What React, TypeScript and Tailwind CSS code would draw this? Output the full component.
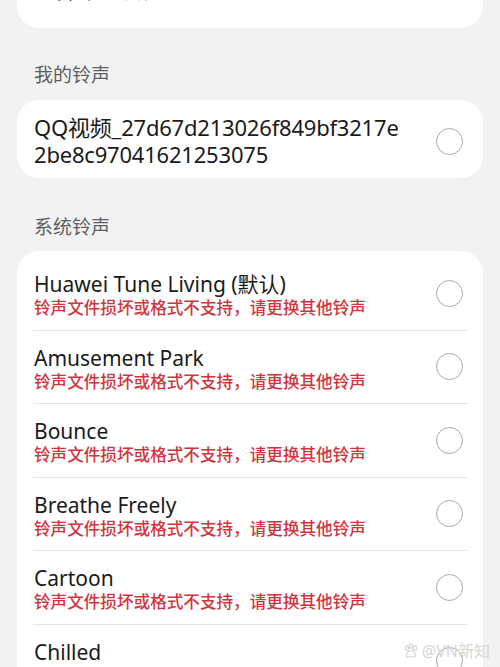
import React from "react";

const font = { fontFamily: '"Noto Sans", "Noto Sans CJK SC", sans-serif' };

const ERR = "铃声文件损坏或格式不支持，请更换其他铃声";

function Radio() {
  return <div className="w-[27px] h-[27px] rounded-full border-[1.5px] border-[#a8a8a8] shrink-0" />;
}

function Paw() {
  return (
    <svg width="16" height="16" viewBox="0 0 16 16" fill="none" stroke="#d6d6d6" strokeWidth="1.2">
      <ellipse cx="4" cy="5" rx="1.6" ry="2.1" />
      <ellipse cx="8" cy="3.2" rx="1.6" ry="2.1" />
      <ellipse cx="12" cy="5" rx="1.6" ry="2.1" />
      <path d="M8 7.5c-2.6 0-4.6 3.2-4.6 5 0 1.4 1.4 1.8 2.4 1.5.9-.3 1.5-.5 2.2-.5s1.3.2 2.2.5c1 .3 2.4-.1 2.4-1.5 0-1.8-2-5-4.6-5z" />
    </svg>
  );
}

const rows = [
  "Huawei Tune Living (默认)",
  "Amusement Park",
  "Bounce",
  "Breathe Freely",
  "Cartoon",
  "Chilled",
];

export default function App() {
  return (
    <div className="relative w-[500px] h-[667px] overflow-hidden bg-[#f2f2f2]" style={font}>
      <div className="px-[17px]">
        <div className="mt-[-40px] h-[68px] bg-white rounded-[22px] px-[17px] flex items-start">
          <div className="mt-[16px] text-[22px] leading-[26px] text-[#1a1a1a]">选择来电铃声</div>
        </div>

        <div className="mt-[34px] mb-[12px] px-[17px] text-[19px] leading-[26px] text-[#5f5f5f]">我的铃声</div>

        <div className="bg-white rounded-[22px] pl-[17px] pr-[20px] pt-[14px] pb-[10px] flex items-center justify-between">
          <div className="text-[22px] leading-[27px] text-[#1a1a1a] tracking-[-0.2px]">
            <div className="h-[27px]">QQ视频_27d67d213026f849bf3217e</div>
            <div className="h-[27px]">2be8c97041621253075</div>
          </div>
          <Radio />
        </div>

        <div className="mt-[36px] mb-[11px] px-[17px] text-[19px] leading-[26px] text-[#5f5f5f]">系统铃声</div>

        <div className="bg-white rounded-t-[22px] pt-[6px] px-[16px]">
          {rows.map((t, i) => (
            <div
              key={t}
              className={
                "flex items-center justify-between pl-[1px] pr-[4px] pt-[15.25px] pb-[11.25px]" +
                (i < rows.length - 1 ? " border-b border-[#e4e4e4]" : "")
              }
            >
              <div className="h-[46px]">
                <div className="h-[25px] text-[21px] leading-[25px] text-[#1a1a1a]">{t}</div>
                <div className="h-[21px] text-[16.6px] leading-[21px] font-medium text-[#d2343e]">{ERR}</div>
              </div>
              <div className="mt-[-4px]">
                <Radio />
              </div>
            </div>
          ))}
        </div>
      </div>

      <div className="absolute right-[10px] top-[641px] flex items-center gap-[3px] text-[16px] leading-[20px] text-[#d6d6d6]">
        <Paw />
        <span>@VN新知</span>
      </div>
    </div>
  );
}
